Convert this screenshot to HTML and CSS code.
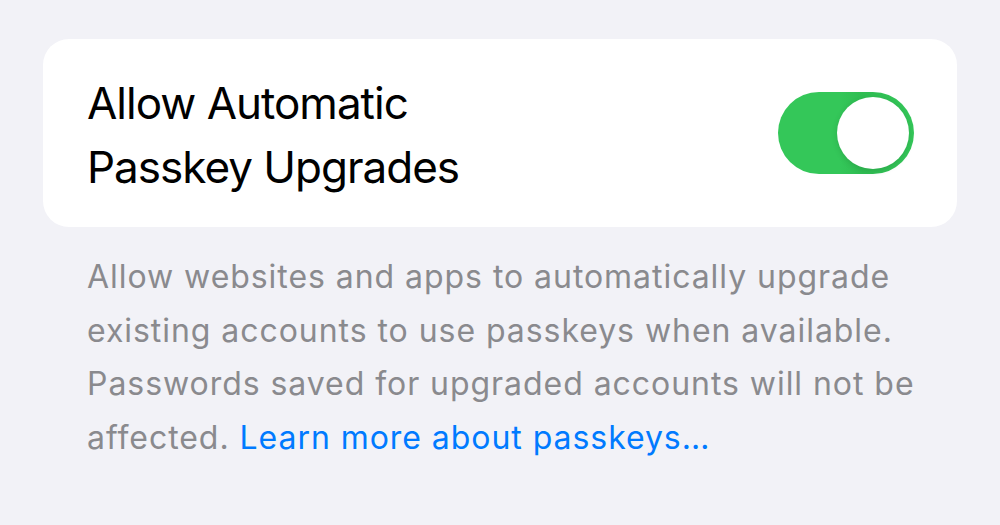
FILE: index.html
```html
<!DOCTYPE html>
<html lang="en">
<head>
    <meta charset="UTF-8">
    <meta name="viewport" content="width=device-width, initial-scale=1.0">
    <title>Passkey Upgrades</title>
    <link rel="stylesheet" href="styles.css">
</head>
<body>
    <div class="group">
        <div class="cell">
            <div class="cell-title">Allow Automatic<br>Passkey Upgrades</div>
            <div class="switch on" role="switch" aria-checked="true">
                <div class="knob"></div>
            </div>
        </div>
    </div>
    <div class="group-footer">
        Allow websites and apps to automatically upgrade<br>
        existing accounts to use passkeys when available.<br>
        Passwords saved for upgraded accounts will not be<br>
        affected. <a href="#">Learn more about passkeys…</a>
    </div>
</body>
</html>
```

FILE: styles.css
```css
body {
    background-color: #f2f2f7;
    font-family: Inter, "Noto Sans", sans-serif;
    margin: 0;
    padding: 39px 43px 0 43px;
}

.cell {
    background-color: #ffffff;
    border-radius: 26px;
    height: 188px;
    box-sizing: border-box;
    padding: 0 43px 0 44px;
    display: flex;
    align-items: center;
    justify-content: space-between;
}

.cell-title {
    color: #000000;
    font-size: 44px;
    letter-spacing: -1px;
    line-height: 64px;
    padding-top: 3px;
}

.switch {
    width: 136px;
    height: 82px;
    border-radius: 41px;
    background-color: #e9e9ea;
    position: relative;
}

.switch.on {
    background: linear-gradient(90deg, #34c759 0%, #34c759 45%, #2fbd52 62%, #34c759 100%);
}

.knob {
    position: absolute;
    top: 5px;
    left: 5px;
    width: 72px;
    height: 72px;
    border-radius: 50%;
    background-color: #ffffff;
    box-shadow: 0 2px 6px rgba(0, 0, 0, 0.12);
}

.switch.on .knob {
    left: 59px;
}

.group-footer {
    color: #8a8a8e;
    font-size: 32px;
    letter-spacing: 0.95px;
    line-height: 53.5px;
    margin-top: 23px;
    padding-left: 44px;
}

.group-footer a {
    color: #007aff;
    text-decoration: none;
}
```
